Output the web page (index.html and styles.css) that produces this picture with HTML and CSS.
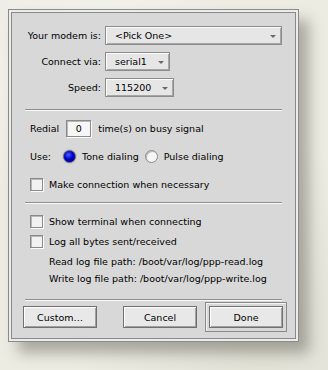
FILE: index.html
```html
<!DOCTYPE html>
<html lang="en">
<head>
  <meta charset="UTF-8" />
  <title>Modem settings</title>
  <link rel="stylesheet" href="styles.css">
</head>
<body>
  <div class="dialog">
    <div class="panel">
      <div class="fields">
        <span class="field-label">Your modem is:</span>
        <div class="popup popup--modem"><span>&lt;Pick One&gt;</span><i class="arrow"></i></div>
        <span class="field-label">Connect via:</span>
        <div class="popup popup--port"><span>serial1</span><i class="arrow"></i></div>
        <span class="field-label">Speed:</span>
        <div class="popup popup--speed"><span>115200</span><i class="arrow"></i></div>
      </div>

      <div class="sep"></div>

      <div class="section">
        <div class="row">
          <span>Redial</span>
          <span class="textbox">0</span>
          <span>time(s) on busy signal</span>
        </div>
        <div class="row">
          <span class="use">Use:</span>
          <span class="radio radio--on"></span>
          <span class="radio-text">Tone dialing</span>
          <span class="radio"></span>
          <span>Pulse dialing</span>
        </div>
        <div class="row">
          <span class="check"></span>
          <span>Make connection when necessary</span>
        </div>
      </div>

      <div class="sep sep--tight"></div>

      <div class="section section--log">
        <div class="row"><span class="check"></span><span>Show terminal when connecting</span></div>
        <div class="row"><span class="check"></span><span>Log all bytes sent/received</span></div>
        <div class="row row--path">Read log file path: /boot/var/log/ppp-read.log</div>
        <div class="row row--path">Write log file path: /boot/var/log/ppp-write.log</div>
      </div>

      <div class="sep"></div>

      <div class="buttons">
        <button class="btn">Custom…</button>
        <button class="btn">Cancel</button>
        <span class="default-ring"><button class="btn">Done</button></span>
      </div>
    </div>
  </div>
</body>
</html>
```

FILE: styles.css
```css
* { margin: 0; padding: 0; box-sizing: border-box; }

body {
  width: 328px;
  height: 370px;
  overflow: hidden;
  background-color: #ecece3;
  background-image:
    radial-gradient(circle at 30% 20%, rgba(255,255,255,0.5), transparent 40%),
    radial-gradient(circle at 80% 90%, rgba(200,200,185,0.35), transparent 45%);
  font-family: "DejaVu Sans", sans-serif;
  font-size: 9.5px;
  color: #000;
  padding: 9px 0 0 8px;
}

/* window frame */
.dialog {
  width: 291px;
  height: 333px;
  border: 1px solid #8a8a8a;
  padding: 2px;
  background: #ececec;
  box-shadow: 10px 11px 13px rgba(70, 70, 60, 0.4);
}

.panel {
  height: 100%;
  border: 1px solid #8a8a8a;
  background: #d8d8d8;
  padding-top: 13px;
}

/* popup fields */
.fields {
  display: grid;
  grid-template-columns: 89px auto;
  column-gap: 4px;
  row-gap: 7px;
  align-items: center;
}

.field-label {
  text-align: right;
}

.popup {
  position: relative;
  height: 19px;
  display: flex;
  align-items: center;
  padding-left: 9px;
  background: #e6e6e6;
  border: 1px solid #8c8c8c;
  box-shadow: inset 1px 1px #fbfbfb, inset -1px -1px #a6a6a6;
}

.popup--modem { width: 177px; }
.popup--port { width: 65px; }
.popup--speed { width: 69px; }

.arrow {
  position: absolute;
  right: 5px;
  top: 8px;
  width: 0;
  height: 0;
  border-left: 3px solid transparent;
  border-right: 3px solid transparent;
  border-top: 3px solid #6a6a6a;
}

.sep {
  margin: 12px 13px 0;
  height: 2px;
  border-top: 1px solid #8e8e8e;
  border-bottom: 1px solid #fafafa;
}

.sep--tight { margin-top: 9px; }

/* option rows */
.section {
  padding: 9px 0 0 18px;
  display: flex;
  flex-direction: column;
  gap: 11px;
}

.row {
  height: 17px;
  display: flex;
  align-items: center;
  white-space: nowrap;
}

.textbox {
  width: 25px;
  height: 17px;
  margin: 0 7px;
  display: flex;
  align-items: center;
  justify-content: center;
  background: #f6f6f6;
  border: 1px solid #8a8a8a;
  box-shadow: inset 1px 1px #b8b8b8, 1px 1px #fcfcfc;
}

.use { width: 33px; }

.radio {
  width: 13px;
  height: 13px;
  margin-right: 6px;
  border-radius: 50%;
  background: #f6f6f6;
  border: 1px solid #8a8a8a;
  box-shadow: inset 1px 1px #b8b8b8;
}

.radio--on {
  background: radial-gradient(circle at 40% 35%, #4a5cff 0, #0000c8 45%, #000080 100%);
  border-color: #5a5a6a;
  box-shadow: 0 0 0 1px #c4c4d0;
}

.radio-text { margin-right: 6px; }

.check {
  width: 13px;
  height: 13px;
  margin-right: 6px;
  background: #f2f2f2;
  border: 1px solid #8a8a8a;
  box-shadow: inset 1px 1px #b8b8b8, 1px 1px #fcfcfc;
}

.section--log {
  gap: 3px;
}

.row--path {
  padding-left: 19px;
  height: 17px;
}

.section--log .row--path + .row--path { margin-top: -3px; }

/* buttons */
.buttons {
  display: flex;
  align-items: center;
  padding: 1px 0 0 11px;
}

.btn {
  width: 74px;
  height: 22px;
  font: inherit;
  color: #000;
  background: #e8e8e8;
  border: 1px solid #707070;
  box-shadow: inset 1px 1px #ffffff, inset -1px -1px #a0a0a0;
}

.btn + .btn { margin-left: 26px; }

.default-ring {
  margin-left: 8px;
  padding: 3px;
  border: 1px solid #8a8a8a;
  box-shadow: inset 1px 1px #f4f4f4;
  display: flex;
}
```
